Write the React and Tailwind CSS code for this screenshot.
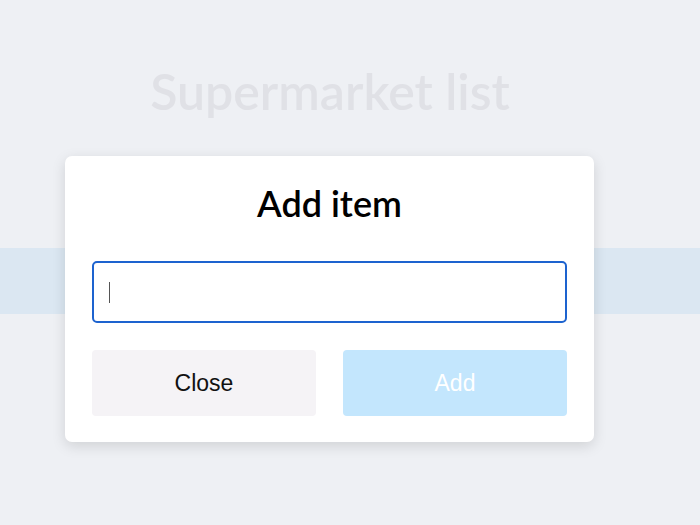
import React from "react";

export default function App() {
  return (
    <div className="relative min-h-[525px] w-full bg-[#eef0f4] overflow-hidden" style={{ fontFamily: "Lato, 'Noto Sans', sans-serif" }}>
      <div className="flex flex-col">
        <div className="w-[660px] pt-[62px] flex justify-center">
          <h1 className="text-[50px] leading-[58px] font-semibold text-[#e0e1e6]">Supermarket list</h1>
        </div>
        <div className="mt-[128px] h-[66px] w-full bg-[#dbe7f2]" />
      </div>

      <div className="absolute left-[65px] top-[156px] w-[529px] h-[286px] bg-white rounded-[7px] shadow-[0_4px_14px_rgba(0,0,0,0.13)] flex flex-col px-[27px]">
        <h2 className="mt-[29px] text-center text-[36px] leading-[36px] font-semibold text-black">Add item</h2>
        <div className="relative mt-[40px] h-[62px] w-full rounded-[5px] border-2 border-[#1d63cf] bg-white">
          <input className="h-full w-full rounded-[5px] bg-transparent outline-none caret-transparent px-[15px]" aria-label="Item" />
          <span className="absolute left-[15px] top-[19px] h-[21px] w-px bg-[#555]" />
        </div>
        <div className="mt-[27px] flex gap-[27px]">
          <button className="h-[66px] flex-1 rounded-[4px] bg-[#f5f3f6] text-[23px] text-[#111]" style={{ fontFamily: "'Liberation Sans', Arial, sans-serif" }}>Close</button>
          <button className="h-[66px] flex-1 rounded-[4px] bg-[#c3e6fd] text-[23px] text-white" style={{ fontFamily: "'Liberation Sans', Arial, sans-serif" }}>Add</button>
        </div>
      </div>
    </div>
  );
}
